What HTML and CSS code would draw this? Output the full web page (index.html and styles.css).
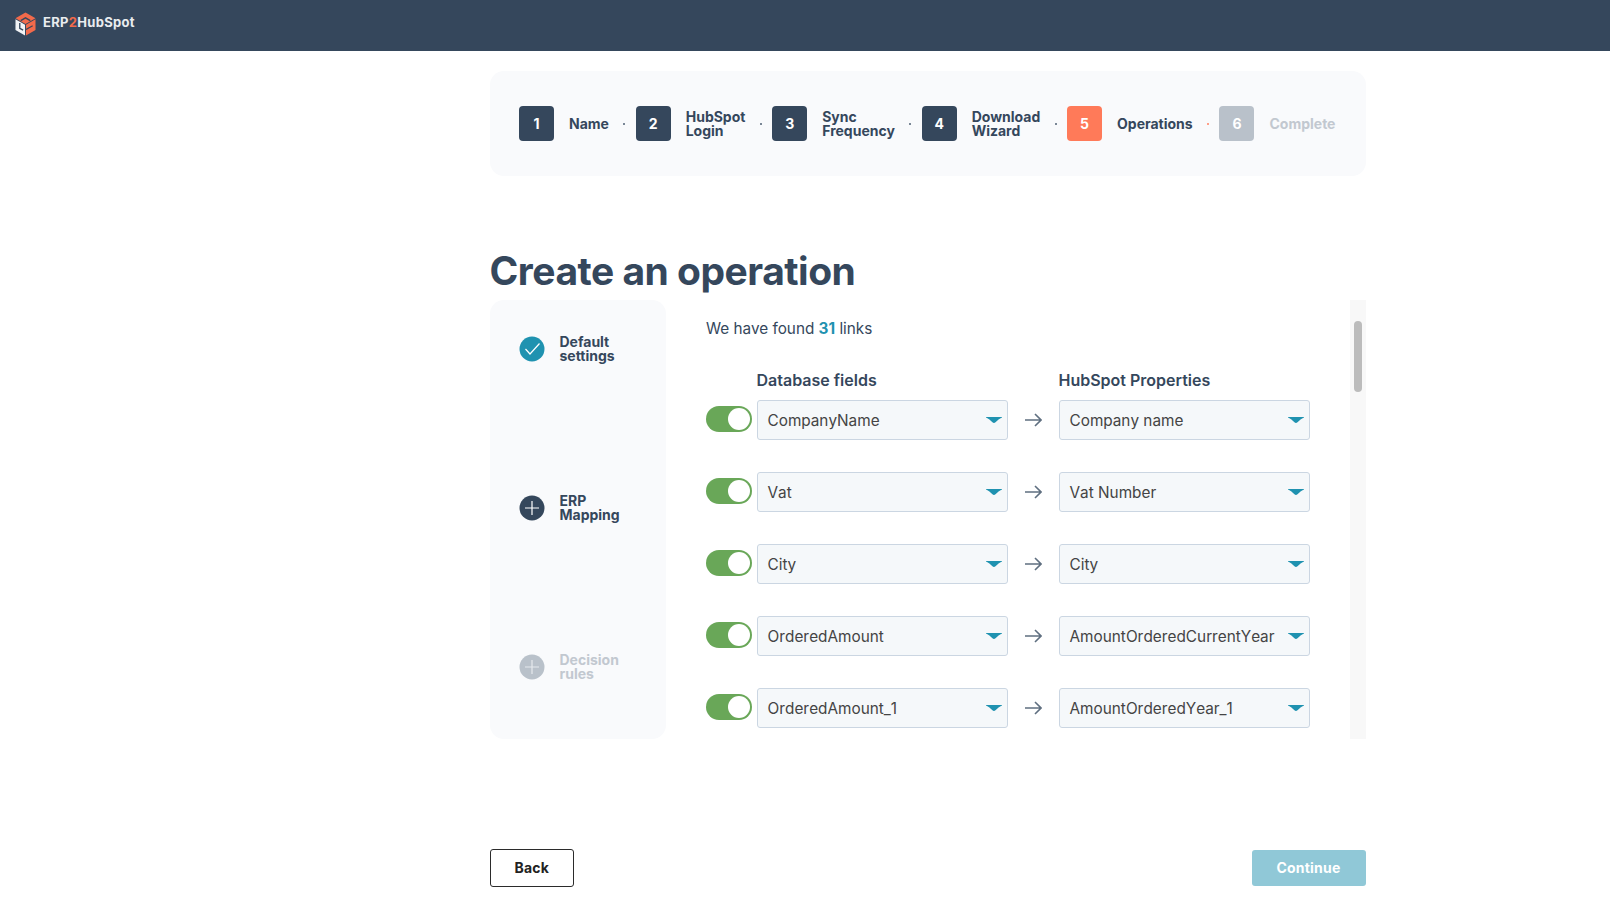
FILE: index.html
```html
<!DOCTYPE html>
<html lang="en">
<head>
<meta charset="utf-8">
<title>ERP2HubSpot</title>
<link rel="stylesheet" href="styles.css">
</head>
<body>
<header class="navbar">
  <svg class="logo-mark" viewBox="0 0 22 24" aria-hidden="true">
    <path fill="#f26a4b" d="M11 0 21.5 6 11 12 .5 6Z"/>
    <path fill="none" stroke="#35475c" stroke-width="1.5" d="M6 8.5 11 5.5 16 8.5"/>
    <path fill="#f1f3f5" d="M.5 7 10.5 12.8V24L.5 18.2Z"/>
    <path fill="none" stroke="#35475c" stroke-width="1.4" d="M5 11V16.5L8.5 18.5"/>
    <path fill="#f26a4b" d="M21.5 7V18.2L11.5 24V12.8Z"/>
    <path fill="none" stroke="#35475c" stroke-width="1.4" d="M11.5 17.8 18.5 13.8"/>
  </svg>
  <span class="logo-text">ERP<span class="logo-two">2</span>HubSpot</span>
</header>

<main class="page">
  <nav class="stepper">
    <div class="step"><span class="step-num">1</span><span class="step-label">Name</span></div>
    <i class="step-dot"></i>
    <div class="step"><span class="step-num">2</span><span class="step-label">HubSpot<br>Login</span></div>
    <i class="step-dot"></i>
    <div class="step"><span class="step-num">3</span><span class="step-label">Sync<br>Frequency</span></div>
    <i class="step-dot"></i>
    <div class="step"><span class="step-num">4</span><span class="step-label">Download<br>Wizard</span></div>
    <i class="step-dot"></i>
    <div class="step"><span class="step-num step-num-active">5</span><span class="step-label">Operations</span></div>
    <i class="step-dot step-dot-active"></i>
    <div class="step step-todo"><span class="step-num step-num-todo">6</span><span class="step-label">Complete</span></div>
  </nav>

  <h1 class="title">Create an operation</h1>

  <section class="workspace">
    <aside class="side">
      <div class="side-item">
        <svg class="side-icon" viewBox="0 0 26 26" aria-hidden="true"><circle cx="13" cy="13" r="12.5" fill="#1f92b0"/><path d="M6.5 13 11 18 20.5 7.5" fill="none" stroke="#fff" stroke-width="1.2"/></svg>
        <span class="side-label">Default<br>settings</span>
      </div>
      <div class="side-item">
        <svg class="side-icon" viewBox="0 0 26 26" aria-hidden="true"><circle cx="13" cy="13" r="12.5" fill="#35475c"/><path d="M13 6V20M6 13H20" fill="none" stroke="#fff" stroke-width="1.2"/></svg>
        <span class="side-label">ERP<br>Mapping</span>
      </div>
      <div class="side-item side-item-off">
        <svg class="side-icon" viewBox="0 0 26 26" aria-hidden="true"><circle cx="13" cy="13" r="12.5" fill="#b9c1ca"/><path d="M13 6V20M6 13H20" fill="none" stroke="#e6e9ed" stroke-width="1.2"/></svg>
        <span class="side-label">Decision<br>rules</span>
      </div>
    </aside>

    <div class="content">
      <p class="found">We have found <b class="found-count">31</b> links</p>
      <div class="mapping-head">
        <span class="col-head col-db">Database fields</span>
        <span class="col-head col-hs">HubSpot Properties</span>
      </div>
      <div class="mapping">
        <span class="toggle"><i class="knob"></i></span>
        <div class="select"><span>CompanyName</span><svg class="caret" viewBox="0 0 16 6"><path d="M0 0H16V.6C12 2 10 6 8 6S4 2 0 .6Z"/></svg></div>
        <svg class="arrow" viewBox="0 0 17 14"><path d="M0 7H16M10 1 16 7 10 13" fill="none" stroke="#5f6f80" stroke-width="1.6"/></svg>
        <div class="select"><span>Company name</span><svg class="caret" viewBox="0 0 16 6"><path d="M0 0H16V.6C12 2 10 6 8 6S4 2 0 .6Z"/></svg></div>

        <span class="toggle"><i class="knob"></i></span>
        <div class="select"><span>Vat</span><svg class="caret" viewBox="0 0 16 6"><path d="M0 0H16V.6C12 2 10 6 8 6S4 2 0 .6Z"/></svg></div>
        <svg class="arrow" viewBox="0 0 17 14"><path d="M0 7H16M10 1 16 7 10 13" fill="none" stroke="#5f6f80" stroke-width="1.6"/></svg>
        <div class="select"><span>Vat Number</span><svg class="caret" viewBox="0 0 16 6"><path d="M0 0H16V.6C12 2 10 6 8 6S4 2 0 .6Z"/></svg></div>

        <span class="toggle"><i class="knob"></i></span>
        <div class="select"><span>City</span><svg class="caret" viewBox="0 0 16 6"><path d="M0 0H16V.6C12 2 10 6 8 6S4 2 0 .6Z"/></svg></div>
        <svg class="arrow" viewBox="0 0 17 14"><path d="M0 7H16M10 1 16 7 10 13" fill="none" stroke="#5f6f80" stroke-width="1.6"/></svg>
        <div class="select"><span>City</span><svg class="caret" viewBox="0 0 16 6"><path d="M0 0H16V.6C12 2 10 6 8 6S4 2 0 .6Z"/></svg></div>

        <span class="toggle"><i class="knob"></i></span>
        <div class="select"><span>OrderedAmount</span><svg class="caret" viewBox="0 0 16 6"><path d="M0 0H16V.6C12 2 10 6 8 6S4 2 0 .6Z"/></svg></div>
        <svg class="arrow" viewBox="0 0 17 14"><path d="M0 7H16M10 1 16 7 10 13" fill="none" stroke="#5f6f80" stroke-width="1.6"/></svg>
        <div class="select"><span>AmountOrderedCurrentYear</span><svg class="caret" viewBox="0 0 16 6"><path d="M0 0H16V.6C12 2 10 6 8 6S4 2 0 .6Z"/></svg></div>

        <span class="toggle"><i class="knob"></i></span>
        <div class="select"><span>OrderedAmount_1</span><svg class="caret" viewBox="0 0 16 6"><path d="M0 0H16V.6C12 2 10 6 8 6S4 2 0 .6Z"/></svg></div>
        <svg class="arrow" viewBox="0 0 17 14"><path d="M0 7H16M10 1 16 7 10 13" fill="none" stroke="#5f6f80" stroke-width="1.6"/></svg>
        <div class="select"><span>AmountOrderedYear_1</span><svg class="caret" viewBox="0 0 16 6"><path d="M0 0H16V.6C12 2 10 6 8 6S4 2 0 .6Z"/></svg></div>
      </div>
    </div>

    <div class="scrollbar"><div class="scroll-thumb"></div></div>
  </section>

  <footer class="actions">
    <button class="btn btn-back" type="button">Back</button>
    <button class="btn btn-continue" type="button">Continue</button>
  </footer>
</main>
</body>
</html>
```
FILE: styles.css
```css
* { box-sizing: border-box; }
html, body { height: 100%; }
body {
  margin: 0;
  background: #fff;
  color: #35475c;
  font-family: Inter, "Liberation Sans", sans-serif;
  overflow: hidden;
}
.navbar {
  height: 51px;
  background: #35475c;
  display: flex;
  align-items: flex-start;
  gap: 7px;
  padding: 12px 0 0 15px;
}
.logo-mark { width: 21px; height: 24px; flex: none; }
.logo-text {
  color: #e9ecef;
  font-size: 13px;
  font-weight: 700;
  line-height: 20px;
  letter-spacing: .3px;
}
.logo-two { color: #f26a4b; }

.page { width: 876px; margin-left: 489.5px; }

.stepper {
  margin-top: 20px;
  height: 105px;
  padding: 0 30px 0 29.5px;
  background: #f9fafc;
  border-radius: 14px;
  display: flex;
  align-items: center;
  justify-content: space-between;
}
.step { display: flex; align-items: center; gap: 15px; }
.step-num {
  width: 35px;
  height: 35px;
  border-radius: 4px;
  background: #35475c;
  color: #fff;
  font-size: 14px;
  font-weight: 700;
  display: flex;
  align-items: center;
  justify-content: center;
}
.step-num-active { background: #ff7a59; }
.step-num-todo { background: #b9c1ca; }
.step-label { font-size: 14px; font-weight: 700; line-height: 14px; }
.step-todo .step-label { color: #c2c8d0; }
.step-dot { width: 2px; height: 2px; margin-left: 4px; background: #7a8796; flex: none; }
.step-dot-active { background: #ff9f88; }

.title {
  margin: 67px 0 0;
  height: 57px;
  font-size: 39px;
  font-weight: 700;
  line-height: 56px;
  letter-spacing: -.5px;
}

.workspace { display: flex; height: 439px; }
.side {
  width: 176px;
  flex: none;
  background: #f9fafc;
  border-radius: 14px;
  padding: 35px 0 0 29.5px;
  display: flex;
  flex-direction: column;
  gap: 131px;
}
.side-item { display: flex; align-items: center; gap: 14.5px; height: 28px; }
.side-icon { width: 26px; height: 26px; flex: none; }
.side-label { font-size: 14px; font-weight: 700; line-height: 14px; }
.side-item-off .side-label { color: #c2c8d0; }

.content { flex: 1; padding: 17px 0 0 40.5px; overflow: hidden; }
.found { margin: 0; font-size: 15.3px; line-height: 24px; }
.found-count { color: #1f92b0; font-weight: 700; }

.mapping-head {
  margin-top: 27px;
  margin-bottom: 8px;
  display: grid;
  grid-template-columns: 50.5px 251px 51px 251px;
}
.col-head { font-size: 16px; font-weight: 600; line-height: 24px; }
.col-db { grid-column: 2; }
.col-hs { grid-column: 4; }

.mapping {
  display: grid;
  grid-template-columns: 50.5px 251px 51px 251px;
  grid-auto-rows: 40px;
  row-gap: 32px;
  align-items: center;
}

.toggle {
  width: 46px;
  height: 26px;
  border-radius: 13px;
  background: #69a758;
  display: flex;
  align-items: center;
  justify-content: flex-end;
  padding-right: 2px;
  margin-top: -2px;
}
.knob { width: 22px; height: 22px; border-radius: 50%; background: #fff; }

.select {
  height: 40px;
  border: 1px solid #cbd6e2;
  border-radius: 3px;
  background: #f5f8fa;
  color: #444;
  font-size: 15.35px;
  font-kerning: none;
  display: flex;
  align-items: center;
  justify-content: space-between;
  padding: 0 5px 0 10px;
}
.caret { width: 16px; height: 6px; fill: #1f92b0; flex: none; }
.arrow { width: 17px; height: 14px; justify-self: center; }

.scrollbar { width: 16px; flex: none; background: #f8f8f8; padding: 21px 4px 0; }
.scroll-thumb { height: 71px; border-radius: 4px; background: #bcbcbc; }

.actions { margin-top: 110px; display: flex; justify-content: space-between; align-items: center; }
.btn {
  font-family: Inter, sans-serif;
  font-size: 14px;
  font-weight: 700;
  letter-spacing: .2px;
  border-radius: 3px;
  cursor: pointer;
  padding: 0 0 2px;
}
.btn-back { width: 84.5px; height: 38px; background: #fff; border: 1.5px solid #2b2b2b; color: #222; }
.btn-continue { width: 114px; height: 36px; background: #90c8d7; border: 0; color: #fff; }
```
